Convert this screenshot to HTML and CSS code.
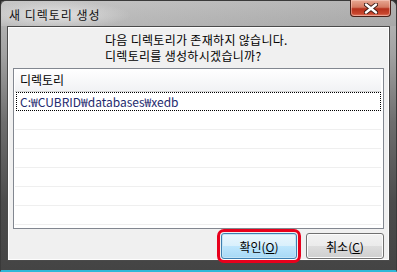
FILE: index.html
```html
<!DOCTYPE html>
<html>
<head>
    <meta charset="utf-8">
    <link rel="stylesheet" href="styles.css">
</head>
<body>
    <div class="window">
        <div class="titlebar">
            <span class="title">새 디렉토리 생성</span>
            <div class="close">
                <svg width="14" height="11" viewBox="0 0 14 11">
                    <path d="M2 1.5 L12 9.5 M12 1.5 L2 9.5" stroke="#3a1a14" stroke-width="4.2" stroke-linecap="round"/>
                    <path d="M2 1.5 L12 9.5 M12 1.5 L2 9.5" stroke="#fff" stroke-width="2.4" stroke-linecap="round"/>
                </svg>
            </div>
        </div>
        <div class="client">
            <div class="message">
                <p>다음 디렉토리가 존재하지 않습니다.</p>
                <p>디렉토리를 생성하시겠습니까?</p>
            </div>
            <div class="listbox">
                <div class="list-header">디렉토리</div>
                <div class="row focused">C:₩CUBRID₩databases₩xedb</div>
                <div class="row"></div>
                <div class="row"></div>
                <div class="row"></div>
                <div class="row"></div>
                <div class="row"></div>
                <div class="row"></div>
            </div>
            <div class="buttons">
                <button class="btn primary">확인(<u>O</u>)</button>
                <button class="btn">취소(<u>C</u>)</button>
            </div>
        </div>
    </div>
</body>
</html>
```

FILE: styles.css
```css
body, html {
    margin: 0;
    padding: 0;
    width: 100%;
    height: 100%;
    overflow: hidden;
    background: #2c2c2c;
}
body {
    font-family: "Noto Sans CJK KR", "Noto Sans", sans-serif;
    font-size: 12px;
    color: #000;
}
.window {
    width: 397px;
    height: 272px;
    box-sizing: border-box;
    display: flex;
    flex-direction: column;
    padding: 0 6px 9px 6px;
    border: 1px solid #3a3a3a;
    border-bottom: 2px solid #2fb8d8;
    border-radius: 6px 6px 0 0;
    background: linear-gradient(#bdbdbd, #a2a2a2 20%, #6e6e6e 45%, #4c4c4c 75%, #444);
}
.titlebar {
    height: 25px;
    display: flex;
    justify-content: space-between;
    align-items: flex-start;
    background: radial-gradient(ellipse 75px 14px at 55px 14px, rgba(235,235,235,0.8), rgba(235,235,235,0)),
                linear-gradient(90deg, rgba(255,255,255,0.15), rgba(0,0,0,0.05));
    margin: 0 -6px;
    padding: 0 6px;
}
.title {
    padding-left: 2px;
    line-height: 27px;
    font-size: 12px;
    letter-spacing: 1px;
    color: #111;
}
.close {
    width: 41px;
    height: 17px;
    margin-top: -1px;
    margin-right: -1px;
    box-sizing: border-box;
    border: 1px solid #4a2018;
    border-top: none;
    border-radius: 0 0 4px 4px;
    background: linear-gradient(#e8a994, #d47a62 45%, #b5311c 55%, #c8462e 85%, #e0806a);
    box-shadow: inset 0 0 0 1px rgba(255,220,210,0.45);
    display: flex;
    justify-content: center;
    align-items: center;
}
.client {
    flex: 1;
    display: flex;
    flex-direction: column;
    background: #f0f0f0;
    border: 1px solid #4a4a4a;
    box-shadow: inset 0 0 0 1px #fdfdfd;
    padding: 0 5px;
}
.message {
    padding: 5px 0 0 92px;
    height: 36px;
    letter-spacing: 0.3px;
}
.message p {
    margin: 0;
    line-height: 16px;
}
.listbox {
    height: 161px;
    box-sizing: border-box;
    border: 1px solid #828790;
    background: #fff;
    padding: 0 2px 0 1px;
}
.list-header {
    height: 22px;
    line-height: 22px;
    padding-left: 5px;
    background: linear-gradient(#fff, #f1f2f4);
    border-bottom: 1px solid #d5d5d5;
}
.row {
    height: 18px;
    line-height: 18px;
    border-bottom: 1px solid #efefef;
    padding-left: 5px;
}
.focused {
    height: 17px;
    line-height: 17px;
    border: 1px dotted #000;
    margin-left: 1px;
    padding-left: 3px;
    color: #1e2a6e;
}
.buttons {
    display: flex;
    justify-content: flex-end;
    gap: 9px;
    padding: 4px 0 0 0;
}
.btn {
    font-family: "Noto Sans CJK KR", "Noto Sans", sans-serif;
    font-size: 12px;
    color: #000;
    width: 78px;
    height: 26px;
    padding: 0;
    border: 1px solid #707070;
    border-radius: 3px;
    background: linear-gradient(#f2f2f2, #ebebeb 50%, #dddddd 51%, #cfcfcf);
    box-shadow: inset 0 0 0 1px #fcfcfc;
}
.btn u {
    text-decoration: underline;
}
.primary {
    width: 76px;
    border-color: #3c7fb1;
    background: linear-gradient(#eaf6fd, #d9f0fc 50%, #bee6fd 51%, #a7d9f5);
    box-shadow: inset 0 0 0 1px #c4e5f6;
    outline: 3px solid #e8001c;
    outline-offset: 1px;
}
```
